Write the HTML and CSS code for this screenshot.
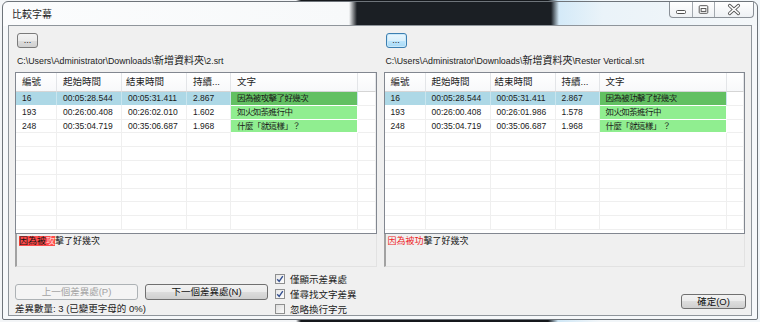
FILE: index.html
```html
<!DOCTYPE html>
<html lang="zh-Hant">
<head>
  <meta charset="UTF-8" />
  <meta name="viewport" content="width=device-width, initial-scale=1.0"/>
  <title>比較字幕</title>
  <link rel="stylesheet" href="styles.css">
</head>
<body>

<div class="screen">
  <div class="window">
    <div class="titlebar">
      <span class="title">比較字幕</span>
      <div class="caption">
        <span class="cap cap-min">
          <svg width="22" height="15" viewBox="0 0 22 15"><rect x="6.5" y="8.5" width="9" height="3" rx="1" fill="#fff" stroke="#505050"/></svg>
        </span>
        <span class="cap cap-max">
          <svg width="22" height="15" viewBox="0 0 22 15"><rect x="6.5" y="3.5" width="9" height="8" rx="1" fill="#fff" stroke="#505050"/><rect x="8.5" y="6.5" width="5" height="3" fill="none" stroke="#505050"/></svg>
        </span>
        <span class="cap cap-close">
          <svg width="39" height="15" viewBox="0 0 39 15"><path d="M15 3.5 L24 11.5 M24 3.5 L15 11.5" stroke="#555" stroke-width="3.4" stroke-linecap="round"/><path d="M15 3.5 L24 11.5 M24 3.5 L15 11.5" stroke="#fff" stroke-width="1.5" stroke-linecap="round"/></svg>
        </span>
      </div>
    </div>

    <div class="client">
      <div class="panes">

        <div class="pane">
          <button class="browse">...</button>
          <div class="path">C:\Users\Administrator\Downloads\<span class="cjk">新增資料夾</span>\2.srt</div>
          <div class="list">
            <div class="row head">
              <span>編號</span><span>起始時間</span><span>結束時間</span><span>持續...</span><span>文字</span><span></span>
            </div>
            <div class="row selected">
              <span>16</span><span>00:05:28.544</span><span>00:05:31.411</span><span>2.867</span><span class="txt">因為被攻擊了好幾次</span><span></span>
            </div>
            <div class="row">
              <span>193</span><span>00:26:00.408</span><span>00:26:02.010</span><span>1.602</span><span class="txt">如火如荼進行中</span><span></span>
            </div>
            <div class="row">
              <span>248</span><span>00:35:04.719</span><span>00:35:06.687</span><span>1.968</span><span class="txt">什麼「就這樣」？</span><span></span>
            </div>
            <div class="row"><span></span><span></span><span></span><span></span><span></span><span></span></div>
            <div class="row"><span></span><span></span><span></span><span></span><span></span><span></span></div>
            <div class="row"><span></span><span></span><span></span><span></span><span></span><span></span></div>
            <div class="row"><span></span><span></span><span></span><span></span><span></span><span></span></div>
            <div class="row"><span></span><span></span><span></span><span></span><span></span><span></span></div>
            <div class="row"><span></span><span></span><span></span><span></span><span></span><span></span></div>
            <div class="row"><span></span><span></span><span></span><span></span><span></span><span></span></div>
          </div>
          <div class="diffbox"><span class="mark-bg">因為被<span class="mark-soft">攻</span></span>擊了好幾次</div>
        </div>

        <div class="pane">
          <button class="browse focused">...</button>
          <div class="path">C:\Users\Administrator\Downloads\<span class="cjk">新增資料夾</span>\Rester Vertical.srt</div>
          <div class="list">
            <div class="row head">
              <span>編號</span><span>起始時間</span><span>結束時間</span><span>持續...</span><span>文字</span><span></span>
            </div>
            <div class="row selected">
              <span>16</span><span>00:05:28.544</span><span>00:05:31.411</span><span>2.867</span><span class="txt">因為被功擊了好幾次</span><span></span>
            </div>
            <div class="row">
              <span>193</span><span>00:26:00.408</span><span>00:26:01.986</span><span>1.578</span><span class="txt">如火如荼進行中</span><span></span>
            </div>
            <div class="row">
              <span>248</span><span>00:35:04.719</span><span>00:35:06.687</span><span>1.968</span><span class="txt">什麼「就這樣」 ？</span><span></span>
            </div>
            <div class="row"><span></span><span></span><span></span><span></span><span></span><span></span></div>
            <div class="row"><span></span><span></span><span></span><span></span><span></span><span></span></div>
            <div class="row"><span></span><span></span><span></span><span></span><span></span><span></span></div>
            <div class="row"><span></span><span></span><span></span><span></span><span></span><span></span></div>
            <div class="row"><span></span><span></span><span></span><span></span><span></span><span></span></div>
            <div class="row"><span></span><span></span><span></span><span></span><span></span><span></span></div>
            <div class="row"><span></span><span></span><span></span><span></span><span></span><span></span></div>
          </div>
          <div class="diffbox"><span class="mark-text">因為被功</span>擊了好幾次</div>
        </div>

      </div>

      <div class="bottom">
        <div class="nav">
          <div class="nav-buttons">
            <button class="btn" disabled>上一個差異處(P)</button>
            <button class="btn">下一個差異處(N)</button>
          </div>
          <div class="status">差異數量: 3 (已變更字母的 0%)</div>
        </div>

        <div class="options">
          <label class="check"><span class="box on"><svg width="8" height="8" viewBox="0 0 8 8"><path d="M1.2 4.2 L3.2 6.4 L6.8 1.2" fill="none" stroke="#35508f" stroke-width="1.4"/></svg></span>僅顯示差異處</label>
          <label class="check"><span class="box on"><svg width="8" height="8" viewBox="0 0 8 8"><path d="M1.2 4.2 L3.2 6.4 L6.8 1.2" fill="none" stroke="#35508f" stroke-width="1.4"/></svg></span>僅尋找文字差異</label>
          <label class="check"><span class="box"></span>忽略換行字元</label>
        </div>

        <button class="btn ok">確定(O)</button>
      </div>
    </div>
  </div>
</div>

</body>
</html>
```

FILE: styles.css
```css
* {
  box-sizing: border-box;
}

body {
  margin: 0;
  font-family: 'Liberation Sans', 'Noto Sans CJK TC', sans-serif;
  font-size: 9.5px;
  color: #1a1a1a;
}

.screen {
  width: 760px;
  height: 322px;
  overflow: hidden;
  padding-top: 1px;
  background: linear-gradient(to right, #f3f5f7 0, #f3f5f7 296px, #15181c 301px, #15181c 548px, #cfe7f6 558px, #f2f6f9 600px, #f2f6f9 100%);
}

/* window frame */
.window {
  margin-left: 2px;
  width: 756px;
  height: 319px;
  border: 1px solid #6e747a;
  border-radius: 6px 6px 2px 2px;
  padding: 0 5px 3px;
  background:
    linear-gradient(to right, #fbfcfd 0, #f7f9fa 346px, #1b1f24 354px, #1b1f24 548px, #d4eaf8 556px, #eaf3f9 600px, #f4f7f9 100%) top / 100% 24px no-repeat,
    #f6f8fa;
}

.titlebar {
  height: 23px;
  display: flex;
  align-items: flex-start;
  justify-content: space-between;
}

.title {
  font-family: 'Noto Sans CJK TC', sans-serif;
  font-size: 10px;
  line-height: 12px;
  margin-top: 6px;
  margin-left: 4px;
  color: #1e1e1e;
}

.caption {
  display: flex;
  margin-right: -2px;
  border: 1px solid #8a9097;
  border-top: none;
  border-radius: 0 0 4px 4px;
  background: linear-gradient(#ffffff, #eef1f4);
  height: 16px;
}

.cap {
  display: flex;
  height: 15px;
}

.cap + .cap {
  border-left: 1px solid #a3a9af;
}

.cap-min, .cap-max {
  width: 22px;
}

.cap-close {
  width: 39px;
}

/* client area */
.client {
  height: 291px;
  border: 1px solid #8f959b;
  background: #f0f0f0;
  display: flex;
  flex-direction: column;
}

.panes {
  display: flex;
  gap: 7px;
  padding: 0 6px;
}

.pane {
  flex: 1;
  padding-top: 7px;
}

.browse {
  display: block;
  margin-left: 2px;
  width: 21px;
  height: 15px;
  padding: 0;
  font-family: 'Liberation Sans', sans-serif;
  font-size: 9px;
  line-height: 9px;
  color: #222;
  border: 1px solid #7a7a7a;
  border-radius: 3px;
  background: linear-gradient(#f3f3f3 0, #ebebeb 50%, #dddddd 50%, #d0d0d0 100%);
}

.browse.focused {
  border-color: #3c7fb1;
  background: linear-gradient(#eaf6fd 0, #d9f0fc 50%, #bee6fd 50%, #a7d9f5 100%);
  box-shadow: inset 0 0 0 1px #c9e8f9;
}

.path {
  margin-top: 7px;
  padding-left: 2px;
  font-size: 8.8px;
  line-height: 12px;
  white-space: nowrap;
  color: #1a1a1a;
}

.path .cjk {
  font-size: 10px;
}

/* list view */
.list {
  margin-top: 5px;
  height: 162px;
  overflow: hidden;
  border: 1px solid #828790;
  background: #fff;
}

.row {
  display: grid;
  grid-template-columns: 41px 65px 65px 44px 127px 1fr;
  height: 13.8px;
  font-size: 8.5px;
  line-height: 13px;
}

.row span {
  padding-left: 6px;
  border-right: 1px solid #efefef;
  border-bottom: 1px solid #efefef;
  white-space: nowrap;
  overflow: hidden;
}

.row.head {
  height: 19px;
  font-size: 9.5px;
  line-height: 18px;
  background: linear-gradient(#ffffff, #f7f8fa);
}

.row.head span {
  border-right-color: #e3e5e8;
  border-bottom-color: #d5d5d5;
  color: #1e1e1e;
}

.row.head span:nth-child(3) {
  padding-left: 4px;
}

.row .txt {
  background: #90ee90;
  letter-spacing: -0.6px;
  border-right-color: #fff;
  border-bottom-color: #fff;
}

.row.selected span {
  background: #add8e6;
  border-right-color: #c9e5ee;
  border-bottom-color: #fff;
}

.row.selected .txt {
  background: #62c062;
}

.row.selected span:last-child {
  background: #fff;
  border-right-color: #efefef;
  border-bottom-color: #efefef;
}

/* diff text box */
.diffbox {
  height: 33px;
  padding: 1px 2px;
  font-size: 9px;
  line-height: 12px;
  border-left: 2px solid #a2a2a2;
  border-right: 1px solid #e2e2e2;
  border-bottom: 1px solid #e2e2e2;
  color: #111;
}

.mark-bg {
  background: #ff4b4b;
}

.mark-soft {
  color: #ffd0d0;
}

.mark-text {
  color: #ee1c1c;
}

/* bottom controls */
.bottom {
  display: flex;
  align-items: flex-start;
  padding: 0 5px 0 6px;
}

.nav {
  width: 253px;
  padding-top: 17px;
}

.nav-buttons {
  display: flex;
  gap: 7px;
}

.btn {
  width: 123px;
  height: 16px;
  padding: 0;
  font-family: 'Liberation Sans', 'Noto Sans CJK TC', sans-serif;
  font-size: 9.5px;
  line-height: 12px;
  color: #111;
  border: 1px solid #707070;
  border-radius: 3px;
  background: linear-gradient(#f2f2f2 0, #ebebeb 50%, #dddddd 50%, #cfcfcf 100%);
}

.btn:disabled {
  color: #a3a3a3;
  border-color: #adb2b5;
  background: #f4f4f4;
}

.status {
  margin-top: 3px;
  line-height: 12px;
  white-space: nowrap;
}

.options {
  margin-left: 7px;
  padding-top: 4px;
  display: flex;
  flex-direction: column;
}

.check {
  display: flex;
  align-items: center;
  height: 15px;
  gap: 5px;
  font-size: 9.5px;
  white-space: nowrap;
}

.box {
  width: 10px;
  height: 10px;
  border: 1px solid #8e8f8f;
  background: linear-gradient(135deg, #dcdcdc, #fbfbfb);
  display: flex;
  align-items: center;
  justify-content: center;
}

.box.on {
  background: linear-gradient(135deg, #e6e6e6, #fdfdfd);
}

.ok {
  margin-left: auto;
  margin-top: 27px;
  width: 65px;
  height: 15px;
}
```
